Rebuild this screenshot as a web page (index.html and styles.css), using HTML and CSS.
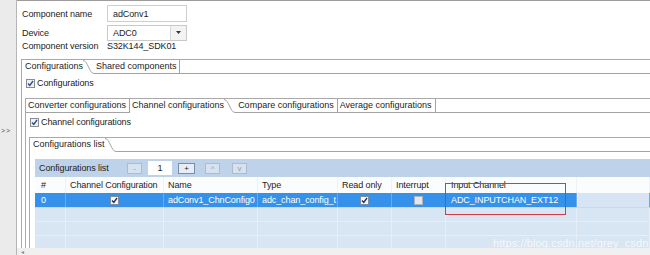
FILE: index.html
```html
<!DOCTYPE html>
<html>
<head>
<meta charset="utf-8">
<link rel="stylesheet" href="styles.css">
</head>
<body>
<div class="app">
  <aside class="side"><span class="side-arrows">&gt;&gt;</span></aside>
  <main class="main">
    <div class="content">
      <div class="props">
        <div class="prop-row">
          <span class="prop-label">Component name</span>
          <span class="field">adConv1</span>
        </div>
        <div class="prop-row">
          <span class="prop-label">Device</span>
          <span class="combo"><span class="combo-text">ADC0</span><span class="combo-btn"><svg width="5" height="3" viewBox="0 0 5 3"><path d="M0 0H5L2.5 3Z" fill="#333"/></svg></span></span>
        </div>
        <div class="prop-row prop-row-ver">
          <span class="prop-label">Component version</span>
          <span>S32K144_SDK01</span>
        </div>
      </div>

      <section class="folder folder-1">
        <div class="tabstrip">
          <div class="tab tab-sel tab-first">Configurations</div>
          <svg class="slant" width="12" height="14" viewBox="0 0 12 14"><path d="M0 0.5C5 0.5 6 13.5 11 13.5H12" fill="none" stroke="#a3a3a3" stroke-width="1"/></svg>
          <div class="tab tab-last">Shared components</div>
          <div class="tab-fill"></div>
        </div>
        <div class="folder-body">
          <div class="check-row">
            <svg class="cb" width="9" height="9" viewBox="0 0 9 9"><rect x="0.5" y="0.5" width="8" height="8" fill="#eef2f7" stroke="#8c8c8c"/><path d="M2 4.5L3.8 6.5L7 2" fill="none" stroke="#2b4f8c" stroke-width="1.4"/></svg>
            <span>Configurations</span>
          </div>

          <section class="folder folder-2">
            <div class="tabstrip">
              <div class="tab tab-sep">Converter configurations</div>
              <div class="tab tab-sel">Channel configurations</div>
              <svg class="slant" width="12" height="14" viewBox="0 0 12 14"><path d="M0 0.5C5 0.5 6 13.5 11 13.5H12" fill="none" stroke="#a3a3a3" stroke-width="1"/></svg>
              <div class="tab tab-sep">Compare configurations</div>
              <div class="tab tab-sep">Average configurations</div>
              <div class="tab-fill"></div>
            </div>
            <div class="folder-body">
              <div class="check-row">
                <svg class="cb" width="9" height="9" viewBox="0 0 9 9"><rect x="0.5" y="0.5" width="8" height="8" fill="#eef2f7" stroke="#8c8c8c"/><path d="M2 4.5L3.8 6.5L7 2" fill="none" stroke="#2b4f8c" stroke-width="1.4"/></svg>
                <span>Channel configurations</span>
              </div>

              <section class="folder folder-3">
                <div class="tabstrip">
                  <div class="tab tab-sel tab-first">Configurations list</div>
                  <svg class="slant" width="12" height="14" viewBox="0 0 12 14"><path d="M0 0.5C5 0.5 6 13.5 11 13.5H12" fill="none" stroke="#a3a3a3" stroke-width="1"/></svg>
                  <div class="tab-fill"></div>
                </div>
                <div class="folder-body folder-body-list">
                  <div class="list">
                    <div class="bar">
                      <span class="bar-title">Configurations list</span>
                      <span class="btn btn-off">-</span>
                      <span class="num">1</span>
                      <span class="btn btn-on">+</span>
                      <span class="btn btn-off btn-up">^</span>
                      <span class="btn btn-off btn-down">v</span>
                    </div>
                    <div class="grid">
                      <div class="row row-head">
                        <span class="cell cell-first">#</span>
                        <span class="cell">Channel Configuration</span>
                        <span class="cell">Name</span>
                        <span class="cell">Type</span>
                        <span class="cell">Read only</span>
                        <span class="cell">Interrupt</span>
                        <span class="cell cell-wide">Input Channel</span>
                        <span class="cell cell-fill"></span>
                      </div>
                      <div class="row row-sel">
                        <span class="cell cell-first">0</span>
                        <span class="cell cell-center"><svg width="9" height="9" viewBox="0 0 9 9"><rect x="0.5" y="0.5" width="8" height="8" fill="#f4f6f9" stroke="#7d8ea4"/><path d="M2 4.5L3.8 6.5L7 2" fill="none" stroke="#1f3558" stroke-width="1.4"/></svg></span>
                        <span class="cell">adConv1_ChnConfig0</span>
                        <span class="cell">adc_chan_config_t</span>
                        <span class="cell cell-center"><svg width="9" height="9" viewBox="0 0 9 9"><rect x="0.5" y="0.5" width="8" height="8" fill="#f4f6f9" stroke="#7d8ea4"/><path d="M2 4.5L3.8 6.5L7 2" fill="none" stroke="#1f3558" stroke-width="1.4"/></svg></span>
                        <span class="cell cell-center"><svg width="9" height="9" viewBox="0 0 9 9"><rect x="0.5" y="0.5" width="8" height="8" fill="#e3e6ea" stroke="#a9b3c0"/></svg></span>
                        <span class="cell cell-wide">ADC_INPUTCHAN_EXT12</span>
                        <span class="cell cell-fill"></span>
                      </div>
                      <div class="row row-empty"><span class="cell"></span><span class="cell"></span><span class="cell"></span><span class="cell"></span><span class="cell"></span><span class="cell"></span><span class="cell"></span><span class="cell cell-fill"></span></div>
                      <div class="row row-empty"><span class="cell"></span><span class="cell"></span><span class="cell"></span><span class="cell"></span><span class="cell"></span><span class="cell"></span><span class="cell"></span><span class="cell cell-fill"></span></div>
                      <div class="row row-empty"><span class="cell"></span><span class="cell"></span><span class="cell"></span><span class="cell"></span><span class="cell"></span><span class="cell"></span><span class="cell"></span><span class="cell cell-fill"></span></div>
                    </div>
                    <div class="mark-box"></div>
                    <div class="watermark">https://blog.csdn.net/grey_csdn</div>
                  </div>
                </div>
              </section>
            </div>
          </section>
        </div>
      </section>
    </div>
    <div class="hscroll"><span class="hscroll-arrow">&#9666;</span></div>
  </main>
</div>
</body>
</html>
```

FILE: styles.css
```css
* { box-sizing: border-box; }

html, body {
  margin: 0;
  padding: 0;
  width: 650px;
  height: 255px;
  overflow: hidden;
  background: #ffffff;
}

body {
  font-family: "Liberation Sans", Arial, sans-serif;
  font-size: 9px;
  letter-spacing: -0.1px;
  color: #1c1c1c;
}

.app {
  display: flex;
  width: 650px;
  height: 255px;
}

.side {
  width: 17px;
  flex: none;
  background: #ebebeb;
  border-right: 1px solid #b5b5b5;
  display: flex;
  align-items: center;
  justify-content: flex-start;
  padding-left: 1px;
}

.side-arrows {
  font-size: 7px;
  color: #555;
  letter-spacing: 1px;
  margin-top: 6px;
}

.main {
  flex: 1;
  display: flex;
  flex-direction: column;
  min-width: 0;
  border-top: 1px solid #9c9c9c;
}

.content {
  flex: 1;
  overflow: hidden;
  min-height: 0;
}

/* properties */
.props {
  display: flex;
  flex-direction: column;
  padding: 4px 0 0 5px;
}

.prop-row {
  display: flex;
  align-items: center;
  height: 17px;
  margin-bottom: 2px;
}

.prop-row-ver {
  height: 10px;
  margin-top: -2px;
  margin-bottom: 0;
}

.prop-label {
  width: 85px;
  flex: none;
}

.field {
  width: 80px;
  height: 17px;
  border: 1px solid #cfcfcf;
  padding-left: 5px;
  display: flex;
  align-items: center;
}

.combo {
  width: 80px;
  height: 16px;
  border: 1px solid #c9c9c9;
  display: flex;
  align-items: center;
}

.combo-text {
  flex: 1;
  padding-left: 5px;
}

.combo-btn {
  width: 16px;
  height: 100%;
  border-left: 1px solid #d8d8d8;
  background: #f3f3f3;
  display: flex;
  align-items: center;
  justify-content: center;
}

/* folders */
.folder {
  border-left: 1px solid #a9a9a9;
  border-top: 1px solid #a9a9a9;
}

.folder-1 {
  margin: 8px 0 0 4px;
}

.folder-2, .folder-3 {
  margin-top: 9px;
}

.tabstrip {
  display: flex;
  height: 14px;
  line-height: 13px;
  letter-spacing: 0;
}

.tab {
  height: 14px;
  padding: 0 2px 0 2px;
  border-bottom: 1px solid #a3a3a3;
  white-space: nowrap;
}

.tab-first {
  padding-left: 3px;
}

.tab-sel {
  border-bottom: 1px solid transparent;
  padding-right: 0;
}

.tab-sep {
  border-right: 1px solid #a3a3a3;
  padding-right: 3px;
}

.tab-last {
  border-right: 1px solid #a3a3a3;
  padding-left: 1px;
}

.slant {
  flex: none;
  display: block;
}

.tab-fill {
  flex: 1;
  border-bottom: 1px solid #a3a3a3;
}

.folder-body {
  padding: 3px 0 0 3px;
}

.check-row {
  display: flex;
  align-items: center;
  height: 12px;
  padding-left: 1px;
  gap: 2px;
}

.cb {
  flex: none;
  display: block;
}

.folder-body-list {
  padding: 7px 0 0 5px;
}

/* list */
.list {
  position: relative;
}

.bar {
  display: flex;
  align-items: center;
  height: 18px;
  background: #bed3ea;
  padding-left: 4px;
}

.bar-title {
  width: 88px;
  flex: none;
}

.btn {
  width: 15px;
  height: 11px;
  display: flex;
  align-items: center;
  justify-content: center;
  font-size: 8px;
  border: 1px solid #aabcd0;
  background: #d6e2ef;
  color: #8aa0b8;
}

.btn-on {
  width: 17px;
  border-color: #7a8ea8;
  background: #e6edf6;
  color: #1c1c1c;
  margin-left: 6px;
}

.btn-up {
  margin-left: 10px;
}

.btn-down {
  margin-left: 12px;
}

.num {
  width: 24px;
  height: 14px;
  margin-left: 6px;
  background: #ffffff;
  display: flex;
  align-items: center;
  justify-content: center;
}

.grid {
  display: flex;
  flex-direction: column;
}

.row {
  display: grid;
  grid-template-columns: 31px 98px 94px 80px 54px 54px 131px 1fr;
}

.cell {
  padding-left: 4px;
  white-space: nowrap;
  overflow: hidden;
  display: flex;
  align-items: center;
  border-right: 1px solid #e3e9f1;
}

.cell-first {
  padding-left: 6px;
}

.cell-wide {
  padding-left: 5px;
}

.cell-center {
  justify-content: center;
  padding-left: 0;
}

.row-head {
  height: 16px;
  background: #fbfcfe;
}

.row-head .cell {
  border-right-color: #eef2f7;
}

.row-sel {
  height: 15px;
  background: #3591ea;
  color: #ffffff;
  border-bottom: 1px solid #c8d9ec;
}

.row-sel .cell {
  border-right-color: #6aaaf0;
}

.row-sel .cell-fill {
  background: #d7e4f3;
  border-left: 1px solid #e8eff8;
}

.row-empty {
  height: 14px;
  background: #d8e5f3;
  border-bottom: 1px solid #e6eef8;
}

.row-empty .cell {
  border-right-color: #e6eef8;
}

.mark-box {
  position: absolute;
  left: 410px;
  top: 24px;
  width: 121px;
  height: 32px;
  border: 1px solid #d23a48;
}

.watermark {
  position: absolute;
  left: 458px;
  top: 78px;
  font-size: 11px;
  letter-spacing: 0.1px;
  color: rgba(255, 255, 255, 0.75);
  white-space: nowrap;
}

.hscroll {
  height: 7px;
  flex: none;
  background: #f0f0f0;
  display: flex;
  align-items: center;
  padding-left: 4px;
}

.hscroll-arrow {
  font-size: 6px;
  color: #888;
}
```
